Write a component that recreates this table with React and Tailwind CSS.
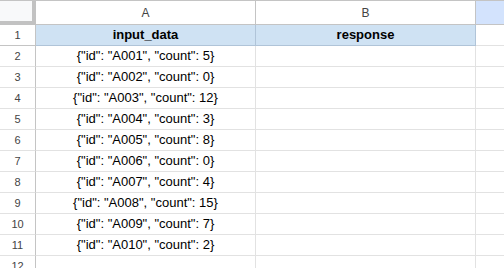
import React from "react";

const data = [
  ['{"id": "A001", "count": 5}'],
  ['{"id": "A002", "count": 0}'],
  ['{"id": "A003", "count": 12}'],
  ['{"id": "A004", "count": 3}'],
  ['{"id": "A005", "count": 8}'],
  ['{"id": "A006", "count": 0}'],
  ['{"id": "A007", "count": 4}'],
  ['{"id": "A008", "count": 15}'],
  ['{"id": "A009", "count": 7}'],
  ['{"id": "A010", "count": 2}'],
  [''],
];

const font = { fontFamily: '"Liberation Sans", Arial, sans-serif' };

export default function App() {
  return (
    <div className="w-[504px] h-[268px] overflow-hidden bg-white border-t border-[#c4c4c4]" style={font}>
      <div className="grid grid-cols-[36px_220px_220px_1fr]">
        {/* header row */}
        <div className="h-[24px] bg-[#f8f9fa] border-r-4 border-b-4 border-[#c2c2c2]"></div>
        <div className="h-[24px] bg-white border-r border-b border-[#c4c4c4] flex items-center justify-center text-[12px] text-[#444]">A</div>
        <div className="h-[24px] bg-white border-r border-b border-[#c4c4c4] flex items-center justify-center text-[12px] text-[#444]">B</div>
        <div className="h-[24px] bg-[#d3e3fd] border-b border-[#c4c4c4]"></div>

        {/* row 1 */}
        <div className="h-[21px] bg-white border-r border-b border-[#c4c4c4] flex items-center justify-center text-[11px] text-[#444]">1</div>
        <div className="h-[21px] bg-[#cfe2f3] border-r border-b border-[#b0c4d8] flex items-center justify-center text-[13px] font-bold text-black">input_data</div>
        <div className="h-[21px] bg-[#cfe2f3] border-r border-b border-[#b0c4d8] flex items-center justify-center text-[13px] font-bold text-black">response</div>
        <div className="h-[21px] bg-white border-b border-[#e2e2e2]"></div>

        {data.map((r, i) => (
          <React.Fragment key={i}>
            <div className="h-[21px] bg-white border-r border-b border-r-[#c4c4c4] border-b-[#e2e2e2] flex items-center justify-center text-[11px] text-[#444]">{i + 2}</div>
            <div className="h-[21px] bg-white border-r border-b border-[#e2e2e2] flex items-center justify-center text-[13px] text-black whitespace-pre">{r[0]}</div>
            <div className="h-[21px] bg-white border-r border-b border-[#e2e2e2]"></div>
            <div className="h-[21px] bg-white border-b border-[#e2e2e2]"></div>
          </React.Fragment>
        ))}
      </div>
    </div>
  );
}
